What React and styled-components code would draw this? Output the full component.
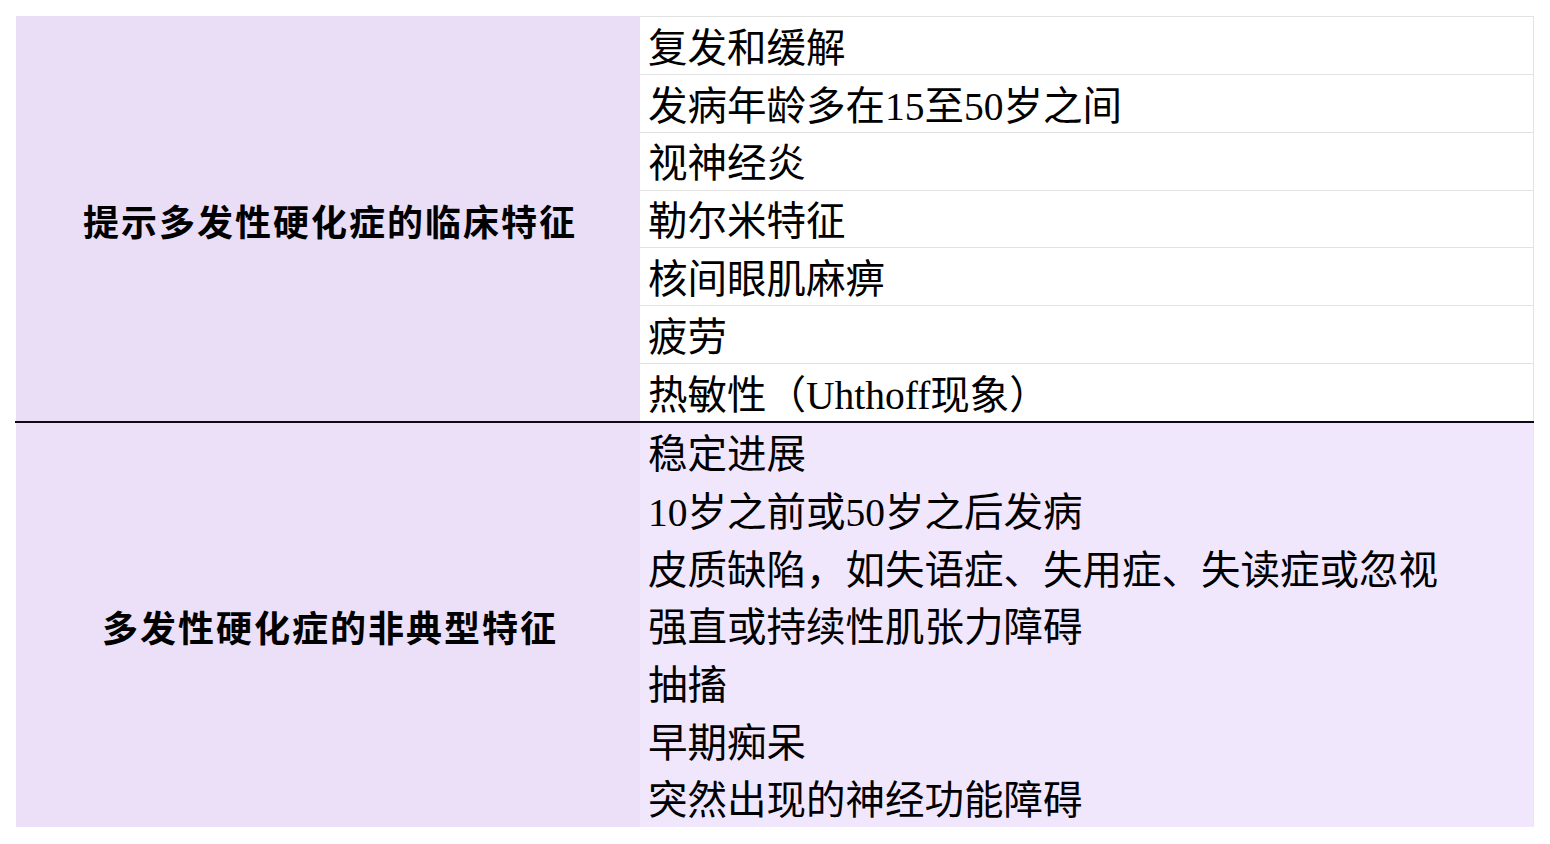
import React from 'react';
import styled, { createGlobalStyle } from 'styled-components';

const GlobalStyle = createGlobalStyle`
    html, body {
        margin: 0;
        padding: 0;
        background: #ffffff;
    }
    body {
        font-family: "Liberation Serif", "Noto Sans CJK SC", serif;
        color: #000000;
        text-spacing-trim: space-all;
    }
`

const Page = styled.div`
    padding: 16px 16px 0 16px;
    width: 1518px;
`

const Section = styled.div`
    display: grid;
    grid-template-columns: 624px 1fr;
    height: ${props => props.height}px;
    background: ${props => props.shade};
`

const Label = styled.div`
    display: flex;
    align-items: center;
    justify-content: center;
    background: ${props => props.shade};
    font-family: "Liberation Serif", "Noto Sans CJK SC", serif;
    font-weight: 700;
    font-size: 36px;
    letter-spacing: 2px;
    padding: 2px 0 0 4px;
    box-sizing: border-box;
`

const Items = styled.div`
    display: flex;
    flex-direction: column;
    background: ${props => (props.boxed ? '#ffffff' : props.shade)};
    border-top: ${props => (props.boxed ? '1px solid #e2e2e2' : 'none')};
    border-right: 1px solid ${props => (props.boxed ? '#e2e2e2' : '#ece2f8')};
`

const Item = styled.div`
    flex: 1;
    display: flex;
    align-items: center;
    padding: 8px 0 0 8px;
    font-size: 39.5px;
    line-height: 1;
    white-space: nowrap;
    border-bottom: ${props => (props.boxed ? '1px solid #e2e2e2' : 'none')};
    &:last-child {
        border-bottom: none;
    }
`

const Divider = styled.div`
    height: 2px;
    margin-left: -1px;
    background: #0d0a14;
`

const sections = [
    {
        label: '提示多发性硬化症的临床特征',
        boxed: true,
        labelShade: '#e9def6',
        shade: '#ffffff',
        items: [
            '复发和缓解',
            '发病年龄多在15至50岁之间',
            '视神经炎',
            '勒尔米特征',
            '核间眼肌麻痹',
            '疲劳',
            '热敏性（Uhthoff现象）',
        ],
    },
    {
        label: '多发性硬化症的非典型特征',
        boxed: false,
        labelShade: '#ebe0f7',
        shade: '#f1e7fd',
        items: [
            '稳定进展',
            '10岁之前或50岁之后发病',
            '皮质缺陷，如失语症、失用症、失读症或忽视',
            '强直或持续性肌张力障碍',
            '抽搐',
            '早期痴呆',
            '突然出现的神经功能障碍',
        ],
    },
];

class App extends React.Component {
    render(){
        return(
            <Page>
                <GlobalStyle/>
                <Section height={405} shade={sections[0].labelShade}>
                    <Label shade={sections[0].labelShade}>{sections[0].label}</Label>
                    <Items boxed shade={sections[0].shade}>
                        {sections[0].items.map(text => (
                            <Item boxed key={text}>{text}</Item>
                        ))}
                    </Items>
                </Section>
                <Divider/>
                <Section height={404} shade={sections[1].labelShade}>
                    <Label shade={sections[1].labelShade}>{sections[1].label}</Label>
                    <Items shade={sections[1].shade}>
                        {sections[1].items.map(text => (
                            <Item key={text}>{text}</Item>
                        ))}
                    </Items>
                </Section>
            </Page>
        )
    }
}

export default App;
